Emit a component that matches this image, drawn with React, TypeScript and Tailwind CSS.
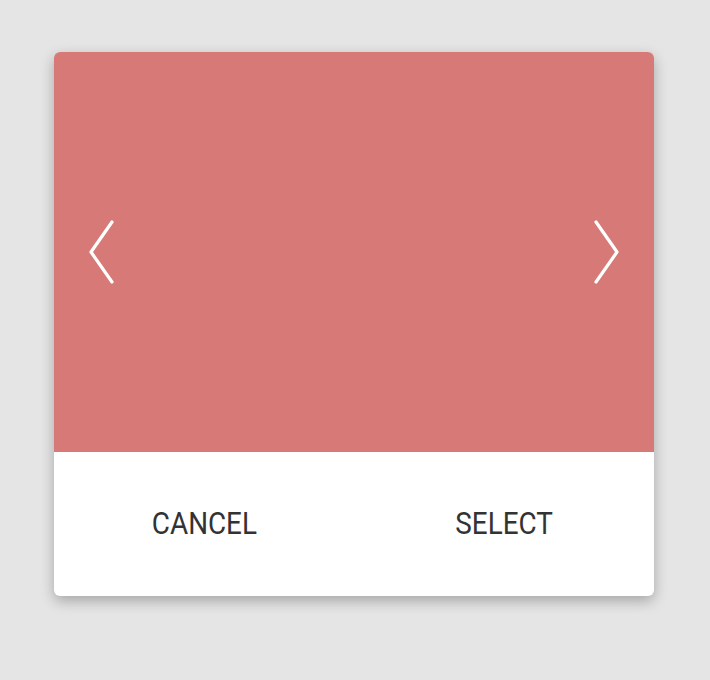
import React from "react";

export default function App() {
  return (
    <div className="w-[710px] h-[680px] bg-[#e5e5e5] pt-[52px] pl-[54px]" style={{ fontFamily: "Roboto, 'Liberation Sans', sans-serif" }}>
      <div className="w-[600px] rounded-[6px] overflow-hidden bg-white shadow-[0_5px_14px_rgba(0,0,0,0.28)] flex flex-col">
        <div className="h-[400px] bg-[#d77a77] flex items-center justify-between px-[34px]">
          <svg width="28" height="66" viewBox="0 0 28 66" fill="none">
            <polyline points="24,3 3,33 24,63" stroke="white" strokeWidth="3.2" strokeLinecap="round" strokeLinejoin="round" />
          </svg>
          <svg width="28" height="66" viewBox="0 0 28 66" fill="none">
            <polyline points="4,3 25,33 4,63" stroke="white" strokeWidth="3.2" strokeLinecap="round" strokeLinejoin="round" />
          </svg>
        </div>
        <div className="h-[144px] flex">
          <div className="flex-1 flex items-center justify-center text-[32px] leading-none text-[#333333] pb-[3px]">
            <span className="inline-block scale-x-[0.87]">CANCEL</span>
          </div>
          <div className="flex-1 flex items-center justify-center text-[32px] leading-none text-[#333333] pb-[3px]">
            <span className="inline-block scale-x-[0.87]">SELECT</span>
          </div>
        </div>
      </div>
    </div>
  );
}
